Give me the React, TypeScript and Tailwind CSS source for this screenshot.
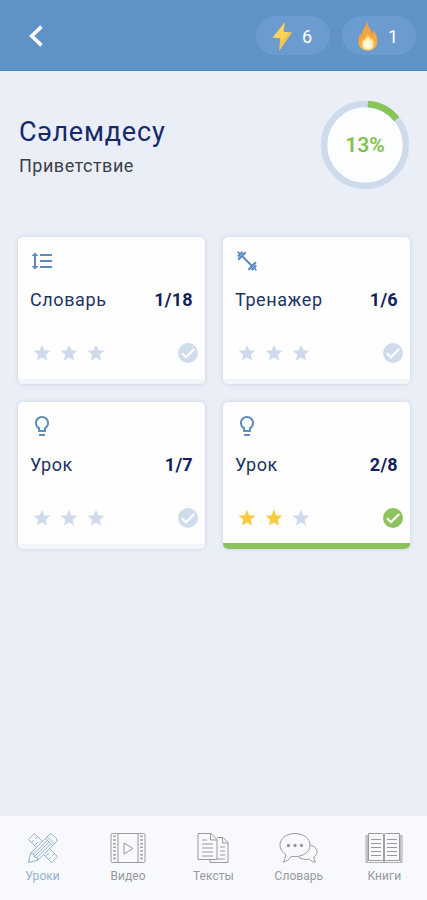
import type { ReactNode } from "react";
import {
  MdFormatLineSpacing,
  MdLightbulbOutline,
  MdStar,
} from "react-icons/md";

const ChevronIcon = () => (
  <svg width="16" height="22" viewBox="0 0 16 22" fill="none">
    <path d="M13.5 1.6 3.7 11l9.8 9.4" stroke="#fff" strokeWidth="3.6" />
  </svg>
);

const BoltIcon = () => (
  <svg width="20" height="30" viewBox="0 0 20 30">
    <path d="M13 1 .5 16.5l7.7.8L7.3 29.5 19.8 11.6l-8.2-.8Z" fill="#fbd25c" />
    <path d="m8.2 17.3-.9 12.2L19.8 11.6l-3-.3-7 8.7Z" fill="#f5bf4c" opacity=".7" />
  </svg>
);

const FlameIcon = () => (
  <svg width="20" height="30" viewBox="0 0 20 30">
    <defs>
      <linearGradient id="flame" x1="0" y1="0" x2="0" y2="1">
        <stop offset="0" stopColor="#f0a04a" />
        <stop offset=".55" stopColor="#f9a436" />
        <stop offset="1" stopColor="#fbb945" />
      </linearGradient>
      <radialGradient id="flameCore" cx=".5" cy=".72" r=".62">
        <stop offset="0" stopColor="#fffef5" />
        <stop offset=".5" stopColor="#fff3c4" />
        <stop offset="1" stopColor="#fdc856" />
      </radialGradient>
    </defs>
    <path
      d="M10 .8c-.6 3 .6 5 2 7.200 1.200 1.900 2 3.400 1.900 5.400 1.300-1 1.700-2.700 1.300-4.400 2.600 2.600 4.100 7.400 4.100 11.200 0 5.800-3.800 9.400-9.500 9.400S.5 26 .5 20.400c0-3.500 1-5.900 1.600-8.200.5 1.200 1.200 2 2 2.500C4 9.500 6.500 6 10 .8Z"
      fill="url(#flame)"
    />
    <path
      d="M9.7 12.5c.4 2.600 2.900 3.700 3.300 6 .8-.4 1.300-1.200 1.500-2 3 6.500 1 12.300-4.600 12.300-5.600 0-7.400-5.300-4.500-11.300.2 1 .6 1.600 1.300 2 .1-2.600 2.600-4 3-7Z"
      fill="url(#flameCore)"
    />
  </svg>
);

const DumbbellIcon = () => (
  <svg width="20" height="20" viewBox="0 0 20 20" fill="none" stroke="currentColor">
    <path d="m5 5 10 10" strokeWidth="1.9" />
    <path d="M1.2 8.6 8.6 1.2M11.4 18.8l7.400-7.400" strokeWidth="2.2" />
    <path d="M.9 5.500 5.500.9M14.500 19.100l4.600-4.600" strokeWidth="2.200" />
    <path d="m.6.6 3 3M16.400 16.400l3 3" strokeWidth="1.600" />
  </svg>
);

const CheckIcon = ({ done }: { done: boolean }) => (
  <svg width="20" height="20" viewBox="0 0 20 20" fill="none">
    <circle cx="10" cy="10" r="10" fill={done ? "#8cc35b" : "#cfdcec"} />
    <path d="m4 10.2 4 4L16.2 6" stroke="#fff" strokeWidth="2.2" />
  </svg>
);

const ToolsIcon = () => (
  <svg width="32" height="32" viewBox="0 0 32 32" fill="none" stroke="currentColor" strokeWidth="1">
    <path d="M7.4 1.5 1.5 7.4l23.1 23.1 5.9-5.9Z" />
    <path d="m4.5 10.4 2.3-2.3M7.6 13.5l3.4-3.4M10.5 4.7 8.2 7M21.5 27.4l2.3-2.3M18.5 24.4l3.4-3.4M27.5 21.5l-2.3 2.3" />
    <path d="m1.5 30.5 2.2-9.3L22.9 2c1.5-1.5 8.6 5.5 7.1 7.1L10.8 28.3Z" fill="#f7f9fd" />
    <path d="m3.7 21.2 2.9.7.7 2.9 2.8.7.7 2.8M20.2 4.7l7.1 7.1M18.5 6.4l7.1 7.1M6.6 21.9 20.5 8.4M10.1 25.5 23.7 11.7M7.3 24.8 22.2 10M1.9 28.6l1.5 1.5" />
  </svg>
);

const VideoIcon = () => (
  <svg width="36" height="32" viewBox="0 0 36 32" fill="none" stroke="currentColor">
    <rect x="1" y="1.5" width="34" height="29" rx="1.5" />
    <path d="M8 1.5v29M28 1.5v29" />
    <path d="M4.5 3.5v26M31.5 3.5v26" strokeWidth="2.6" strokeDasharray="1.5 2.2" />
    <path d="M14 11v11l9-5.5Z" />
  </svg>
);

const TextsIcon = () => (
  <svg width="32" height="32" viewBox="0 0 32 32" fill="none" stroke="currentColor">
    <path d="M20 5.5h6l5 5v20H13v-3" />
    <path d="M25.5 5.5V11H31M23 15h5M23 19h5M23 23h5M16 27h12" />
    <path d="M1 1.5h13l6 6v20H1Z" fill="#f7f9fd" />
    <path d="M13.5 1.5V8H20M5 8h5M5 12h11M5 16h11M5 20h11M5 24h11" />
  </svg>
);

const ChatIcon = () => (
  <svg width="40" height="32" viewBox="0 0 40 32" fill="none" stroke="currentColor">
    <path d="M31.5 13c3.8 1.2 6.5 3.5 6.5 6.5 0 2.5-1.3 4.2-3.2 5.5.1 2.3.9 4 1.7 5.2-2.8-.3-4.7-1.5-6-3-3.5.7-8 .2-11-2.2" />
    <path
      d="M16 1.5C7.5 1.5 1 6.5 1 13c0 4 2.2 7 5.7 9.2.1 3.4-1 5.6-2.7 7.8 4-.5 6.5-2.7 8.2-5.7 1.2.2 2.5.3 3.8.3 8.5 0 15-5 15-11.6S24.5 1.5 16 1.5Z"
      fill="#f7f9fd"
    />
    <g fill="currentColor" stroke="none">
      <circle cx="9.5" cy="13.5" r="1.7" />
      <circle cx="16" cy="13.5" r="1.7" />
      <circle cx="22.5" cy="13.5" r="1.7" />
    </g>
  </svg>
);

const BooksIcon = () => (
  <svg width="38" height="32" viewBox="0 0 38 32" fill="none" stroke="currentColor">
    <path d="M3.5 1.5h13c1.5 0 2.5.3 2.5 1 0-.7 1-1 2.5-1h13v27h-13c-1.500 0-2.500.7-2.500 1.500 0-.8-1-1.500-2.500-1.500h-13Z" />
    <path d="M3.5 3.5H1v27h36v-27h-2.5M2.3 4v26M35.7 4v26" strokeWidth=".8" />
    <path d="M19 2.5v27" strokeWidth="1.8" />
    <path d="M6 7.5h10M6 11.5h10M6 15.5h10M6 19.5h10M6 23.5h10M22 7.5h10M22 11.5h10M22 15.5h10M22 19.5h10M22 23.5h10" />
  </svg>
);

const ProgressRing = ({ percent }: { percent: number }) => {
  const length = 2 * Math.PI * 41;
  return (
    <div className="relative h-[90px] w-[90px]">
      <svg width="90" height="90" viewBox="0 0 90 90">
        <circle cx="45" cy="45" r="41" fill="#fbfdff" stroke="#cddbec" strokeWidth="6.5" />
        <circle
          cx="45"
          cy="45"
          r="41"
          fill="none"
          stroke="#87c556"
          strokeWidth="6.5"
          strokeDasharray={`${(length * percent) / 100} ${length}`}
          transform="rotate(-86 45 45)"
        />
      </svg>
      <span className="absolute inset-0 flex items-center justify-center pt-[2px] text-[21px] font-semibold text-[#83c14e]">
        {percent}%
      </span>
    </div>
  );
};

const lessons = [
  {
    title: "Словарь",
    count: "1/18",
    stars: 0,
    done: false,
    icon: <MdFormatLineSpacing className="h-6 w-6" />,
  },
  {
    title: "Тренажер",
    count: "1/6",
    stars: 0,
    done: false,
    icon: <DumbbellIcon />,
  },
  {
    title: "Урок",
    count: "1/7",
    stars: 0,
    done: false,
    icon: <MdLightbulbOutline className="h-6 w-6" />,
  },
  {
    title: "Урок",
    count: "2/8",
    stars: 2,
    done: true,
    icon: <MdLightbulbOutline className="h-6 w-6" />,
  },
];

const tabs = [
  { label: "Уроки", icon: <ToolsIcon />, active: true },
  { label: "Видео", icon: <VideoIcon />, active: false },
  { label: "Тексты", icon: <TextsIcon />, active: false },
  { label: "Словарь", icon: <ChatIcon />, active: false },
  { label: "Книги", icon: <BooksIcon />, active: false },
];

const Badge = ({ icon, value }: { icon: ReactNode; value: number }) => (
  <div className="flex h-[39px] w-[74px] items-center rounded-full bg-[#6c9bcf] pl-[16px] text-[18px] text-white">
    {icon}
    <span className="ml-[10px] pt-px">{value}</span>
  </div>
);

const App = () => {
  return (
    <div className="flex h-[900px] w-[427px] flex-col overflow-hidden bg-[#eaeff7] font-['Roboto','Noto_Sans',sans-serif]">
      {/* Header */}
      <header className="flex h-[71px] shrink-0 items-center justify-between border-b border-[#4e83c0] bg-[#5f92c7] pl-[28px] pr-[11px]">
        <button className="pt-px">
          <ChevronIcon />
        </button>
        <div className="flex gap-[12px] pt-px">
          <Badge icon={<BoltIcon />} value={6} />
          <Badge icon={<FlameIcon />} value={1} />
        </div>
      </header>

      <main className="flex-1 px-[18px]">
        {/* Topic */}
        <div className="flex h-[166px] items-start justify-between pt-[29px]">
          <div className="pt-[14px] pl-px">
            <h1 className="text-[27px] leading-9 tracking-[0.8px] text-[#17286a]">
              Сәлемдесу
            </h1>
            <p className="text-[18px] leading-8 tracking-[0.5px] text-[#3b4048]">
              Приветствие
            </p>
          </div>
          <div className="-mr-[1px]">
            <ProgressRing percent={13} />
          </div>
        </div>

        {/* Lessons */}
        <div className="grid grid-cols-[187px_187px] gap-x-[18px] gap-y-[18px]">
          {lessons.map((lesson, i) => (
            <div
              key={i}
              className="flex h-[147px] flex-col overflow-hidden rounded-[5px] bg-[#fefeff] shadow-[0_0_4px_rgba(90,110,140,0.24)]"
            >
              <div className="mt-[12px] ml-[12px] flex h-6 w-6 items-center justify-center text-[#5b8bbf]">
                {lesson.icon}
              </div>
              <div className="mt-[13px] flex items-center justify-between px-[12px] text-[18px] leading-7 text-[#22335f]">
                <span className="tracking-[0.6px]">{lesson.title}</span>
                <span className="font-bold tracking-[0.3px] text-[#131e5b]">
                  {lesson.count}
                </span>
              </div>
              <div className="mt-[29px] flex items-center justify-between pr-[7px] pl-[14px]">
                <div className="flex gap-[7px]">
                  {[0, 1, 2].map((n) => (
                    <MdStar
                      key={n}
                      className={
                        n < lesson.stars
                          ? "h-5 w-5 text-[#f9cb43]"
                          : "h-5 w-5 text-[#cfdbec]"
                      }
                    />
                  ))}
                </div>
                <CheckIcon done={lesson.done} />
              </div>
              <div
                className={
                  lesson.done
                    ? "mt-auto h-[6px] bg-[#8bc35a]"
                    : "mt-auto h-[5px] bg-[#f2f5fa]"
                }
              />
            </div>
          ))}
        </div>
      </main>

      {/* Tab bar */}
      <nav className="grid h-[84px] shrink-0 grid-cols-5 bg-[#f7f9fd] pt-4">
        {tabs.map((tab) => (
          <div
            key={tab.label}
            className={
              tab.active
                ? "flex flex-col items-center text-[#94b2d0]"
                : "flex flex-col items-center text-[#989a9f]"
            }
          >
            {tab.icon}
            <span className="mt-1 text-[12px] leading-4 tracking-[0.05px]">
              {tab.label}
            </span>
          </div>
        ))}
      </nav>
    </div>
  );
};

export default App;
